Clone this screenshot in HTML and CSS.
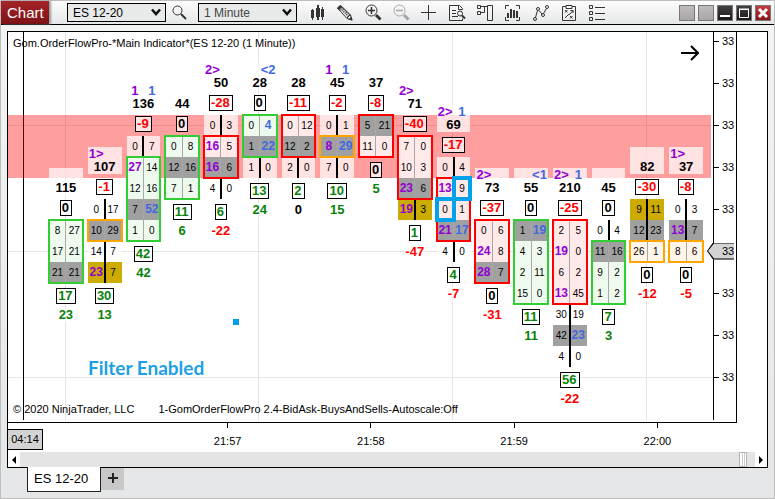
FILE: index.html
```html
<!DOCTYPE html>
<html lang="en">
<head>
<meta charset="utf-8">
<title>Chart</title>
<link rel="stylesheet" href="styles.css">
</head>
<body>
<div class="window">
  <header class="toolbar">
    <h1 class="title">Chart</h1>
    <label class="picker instrument">
      <select aria-label="Instrument"><option>ES 12-20</option></select>
      <svg class="chevron" viewBox="0 0 10 8"><path d="M1 1.5 5 6 9 1.5"/></svg>
    </label>
    <button class="search" aria-label="Search"><svg class="icon" viewBox="0 0 18 18"><circle cx="7.5" cy="6.5" r="4.5"/><path d="m11 10 5 5" stroke-width="2"/></svg></button>
    <label class="picker">
      <select class="muted" aria-label="Interval"><option>1 Minute</option></select>
      <svg class="chevron" viewBox="0 0 10 8"><path d="M1 1.5 5 6 9 1.5"/></svg>
    </label>
    <nav class="tools">
      <button aria-label="Chart style"><svg class="icon" viewBox="0 0 18 18"><path class="solid" d="M3 6h3v8H3zM8 4h4v9H8zM13 5h3v8h-3zM4 5h1v11H4zM9 1h2v15H9zM14 3h1v13h-1z"/></svg></button>
      <button aria-label="Drawing tools"><svg class="icon" viewBox="0 0 18 18"><path d="m1.5 4 3-2.5 10 9.5 1.500 5-5-1.500zM4 6.500l3-3M11 14l3.500-3.500" /><path d="m6 6 7 7M7.500 5l7 7" stroke-width="1.500" stroke-dasharray="1 1"/><path class="solid" d="m16.500 16.500-4-1 3-3zM1 4l3.500-3 2 2L3 6z"/></svg></button>
      <button aria-label="Zoom in"><svg class="icon" viewBox="0 0 18 18"><circle cx="7.500" cy="6.500" r="5.500"/><path d="M4 6.500h7M7.500 3v7" stroke-width="1.500"/><path d="m12 11 4.500 4.500" stroke-width="3"/></svg></button>
      <button aria-label="Zoom out" disabled><svg class="icon" viewBox="0 0 18 18"><circle cx="7.500" cy="6.500" r="5.500"/><path d="M4 6.500h7" stroke-width="1.500"/><path d="m12 11 4.500 4.500" stroke-width="3"/></svg></button>
      <button aria-label="Crosshair"><svg class="icon" viewBox="0 0 18 18"><path d="M8.500 1v15M1 8.500h15"/></svg></button>
      <button aria-label="Data box"><svg class="icon" viewBox="0 0 18 18"><path d="M14.500 5.500V4.500l-3-3h-10v15h13v-2M10.500 1.500v4h4M4 6.500h4M4 9.500h4M4 12.500h6"/><circle cx="12" cy="9.500" r="2.500"/><path d="m14 11.500 3 3" stroke-width="2"/></svg></button>
      <button aria-label="Chart trader"><svg class="icon" viewBox="0 0 18 18"><path d="M1.500 1.500h3v3h-3zM1.500 7.500h3v3h-3zM11.500 1.500h5v15h-5zM5 2.500h6M5 8.500h3.500v-6"/></svg></button>
      <button aria-label="Data series"><svg class="icon" viewBox="0 0 18 18"><path d="M5 1.500H1.500V5M12 1.500h3.500V5M1.500 13v3.500H5M15.500 13v3.500H12"/><path class="solid" d="M3 9h2v5H3zM6 5h2v9H6zM9 6h2v8H9zM12 7h2v7h-2z"/></svg></button>
      <button aria-label="Indicators"><svg class="icon" viewBox="0 0 18 18"><circle cx="3" cy="15" r="1.500"/><circle cx="6" cy="5" r="1.500"/><circle cx="11" cy="11" r="1.500"/><circle cx="15" cy="3" r="1.500"/><path d="m3.500 13.500 2-7M7 6.500l3 3.500M11.500 9.500l3-5"/></svg></button>
      <button aria-label="Strategies"><svg class="icon" viewBox="0 0 18 18"><path d="M6 2.500H2.500v14h13v-14H12M6 1.500h6v3H6zM5 6l2.500 2.500M7.500 6 5 8.500M10 12l2.500 2.500M12.500 12 10 14.500M5 14l3-3 2-1 3-3.500M10.500 6.500h2.500V9"/></svg></button>
      <button aria-label="Properties"><svg class="icon" viewBox="0 0 18 18"><path d="M1.500 1.500h3v3h-3zM1.500 7.500h3v3h-3zM1.500 13.500h3v3h-3zM7 3.500h10M7 9.500h10M7 15.500h10"/></svg></button>
    </nav>
    <div class="controls">
      <button class="link" aria-label="Instrument link"></button>
      <button class="link" aria-label="Interval link"></button>
      <button class="dark" aria-label="Minimize"><svg viewBox="0 0 14 14"><path d="M2 10h10" stroke-width="2"/></svg></button>
      <button class="dark" aria-label="Maximize"><svg viewBox="0 0 14 14"><path d="M2.500 3.500h9v8h-9zM2 3h10"/></svg></button>
      <button class="close" aria-label="Close"><svg viewBox="0 0 14 14"><path d="m3 3 8 8M11 3l-8 8" stroke-width="3"/></svg></button>
    </div>
  </header>

  <main class="frame">
    <div class="chart">
      <section class="plot">
        <svg class="lines">
          <line x1="8.1%" x2="8.1%" y1="0" y2="100%"/><line x1="35.5%" x2="35.5%" y1="0" y2="100%"/>
          <line x1="63%" x2="63%" y1="0" y2="100%"/><line x1="90.5%" x2="90.5%" y1="0" y2="100%"/>
          <line x1="0" x2="100%" y1="93.5" y2="93.5"/><line x1="0" x2="100%" y1="219.5" y2="219.5"/><line x1="0" x2="100%" y1="345.5" y2="345.5"/>
          <line class="cursor" x1="15.5" x2="15.5" y1="0" y2="100%"/>
        </svg>
        <div class="zone"></div>
        <div class="bars" id="bars"></div>
        <p class="caption">Gom.OrderFlowPro-*Main Indicator*(ES 12-20 (1 Minute))</p>
        <svg class="arrow" viewBox="0 0 18 16"><path d="M0 8h17M10 1l7 7-7 7"/></svg>
        <i class="dot"></i>
        <p class="note">Filter Enabled</p>
        <footer class="credits"><span>© 2020 NinjaTrader, LLC</span><span>1-GomOrderFlowPro 2.4-BidAsk-BuysAndSells-Autoscale:Off</span></footer>
      </section>
      <div class="prices">
        <ol><li>33</li><li>33</li><li>33</li><li>33</li><li>33</li><li class="last">33</li><li>33</li><li>33</li><li>33</li></ol>
      </div>
    </div>
    <div class="times">
      <span class="clock">04:14</span>
      <ol><li>21:57</li><li>21:58</li><li>21:59</li><li>22:00</li></ol>
    </div>
    <div class="scroll">
      <button aria-label="Scroll left"><svg viewBox="0 0 4 8"><path d="M4 0v8L0 4z"/></svg></button>
      <span class="thumb"></span>
      <button aria-label="Scroll right"><svg viewBox="0 0 4 8"><path d="M0 0v8l4-4z"/></svg></button>
    </div>
  </main>
  <nav class="tabs">
    <button class="tab">ES 12-20</button>
    <button class="add" aria-label="Add tab"><svg viewBox="0 0 10 10"><path d="M5 0v10M0 5h10"/></svg></button>
  </nav>
</div>
<script src="chart.js"></script>
</body>
</html>
```
FILE: styles.css
```css
* { box-sizing: border-box; }
body { margin: 0; font: 11px/14px "Liberation Sans", Arial, sans-serif; color: #000; }
h1, p, ol { margin: 0; padding: 0; font-weight: normal; }
ol { list-style: none; }
button { padding: 0; border: 0; background: none; font: inherit; color: inherit; }

.window {
  display: flex; flex-direction: column; min-height: 100vh;
  border: 1px solid #bdbdbd; background: linear-gradient(#f3f4f4, #e5e6e8);
}

.toolbar {
  display: flex; align-items: center; height: 24px;
  border-bottom: 1px solid #000; background: linear-gradient(#fcfcfc, #e6e7e8);
}
.title {
  align-self: stretch; width: 48px; padding-left: 6px;
  font-size: 15px; line-height: 23px; color: #fff;
  background: linear-gradient(#a52328, #7c1216);
  box-shadow: 2px 0 2px #999;
}
.picker { position: relative; width: 99px; height: 19px; }
.instrument { margin-left: 18px; }
.picker select {
  display: block; width: 100%; height: 100%; padding: 0 5px; appearance: none;
  border: 1px solid #000; border-radius: 0; background: #e8eaea;
  font: 12px "Liberation Sans", Arial, sans-serif; color: #000;
}
.picker .muted { color: #444; }
.chevron { position: absolute; right: 5px; top: 5px; width: 10px; height: 8px; pointer-events: none; fill: none; stroke: #111; stroke-width: 2.5; }
.search { display: flex; width: 32px; padding-left: 4px; }
.icon { width: 18px; height: 18px; fill: none; stroke: #333; }
.solid { fill: #333; stroke: none; }
.tools { display: flex; margin-left: 6px; }
.tools button { display: flex; justify-content: center; width: 28px; }
.tools button:disabled { opacity: .4; }
.controls { display: flex; gap: 3px; margin: 0 3px 0 auto; }
.controls button { display: flex; width: 16px; height: 16px; border: 1px solid #777; }
.controls svg { width: 14px; height: 14px; fill: none; stroke: #fff; }
.link { background: linear-gradient(#c0bcbd, #aaa6a7); }
.dark { background: linear-gradient(#444041, #1c1819); }
.close { background: linear-gradient(#c43a3e, #8c1519); }

.frame { display: flex; flex: 1; flex-direction: column; margin: 6px 6px 0; border: 1px solid #000; background: #fff; }
.chart { display: flex; flex: 1; margin-right: 30px; border: solid #000; border-width: 0 1px 1px 0; }
.plot { position: relative; display: flex; flex: 1; flex-direction: column; min-width: 0; }
.lines { position: absolute; inset: 0 0 2px; width: 100%; height: calc(100% - 2px); shape-rendering: crispEdges; stroke: #e4e4e4; }
.cursor { stroke: #000; }
.zone { position: absolute; top: 83px; right: 2px; left: 0; height: 63px; background: rgba(255, 0, 0, .38); }
.caption { position: absolute; top: 4px; left: 5px; }
.arrow { position: absolute; top: 13px; right: 14px; width: 18px; height: 16px; fill: none; stroke: #000; stroke-width: 2; }
.dot { position: absolute; top: 287px; left: 225px; width: 6px; height: 6px; background: #009fe8; }
.note { position: absolute; top: 324px; left: 80px; font: bold 19px/24px Lato, sans-serif; color: #1c9fe6; }
.credits { position: relative; display: flex; gap: 24px; margin-top: auto; padding: 0 5px 6px; }

.bars {
  position: relative; display: grid; grid-template-columns: repeat(17, 1fr); align-items: start;
  column-gap: 5px; margin-bottom: -20px; padding: 31px 10px 0 41px;
  font-weight: bold; font-size: 13px; text-align: center;
}
.bar { display: flex; flex-direction: column; align-items: center; margin-top: calc(var(--level) * 21px); }
.head { align-self: stretch; margin-bottom: 5px; background: rgba(255, 255, 255, .7); }
.signals { display: grid; grid-template-columns: 1fr 1fr; justify-items: center; height: 13px; line-height: 13px; }
.signals span { white-space: nowrap; }
.box { height: 16px; padding: 0 2px 0 1px; border: 1px solid #000; line-height: 14px; background: rgba(255, 255, 255, .7); }
.top { margin-bottom: 4px; }
.bottom { margin: 5px 0 4px; }
.sum { background: rgba(255, 255, 255, .7); }
.pos { color: #0a820a; }
.neg { color: #f00; }
.group { align-self: stretch; }
.row {
  display: grid; grid-template-columns: 1fr 1fr; height: 21px; line-height: 21px;
  font-size: 10px; font-weight: normal;
  background: linear-gradient(#000, #000) center / 2px 100% no-repeat rgba(255, 255, 255, .7);
}
.framed { position: relative; outline: 2px solid; outline-offset: -1px; }
.framed .row { background-image: linear-gradient(#a8a8a8, #a8a8a8); background-size: 1px 100%; }
.green { outline-color: #32cd32; } .green .row { background-color: #effaef; }
.red { outline-color: #f00; } .red .row { background-color: #ffe9e9; }
.orange { outline-color: #ffa500; } .orange .row { background-color: #fff5e9; }
.group .gray { background-color: #a0a0a0; }
.group .gold { background-color: #ccac00; }
.buy, .sell { font-size: 12px; font-weight: bold; }
.sell { color: #9400d3; }
.buy { color: #4169e1; }
.signals .buy, .signals .sell { font-size: 13px; }
.marked { position: relative; }
.marked::after { content: ""; position: absolute; inset: -2px; border: 4px solid #00a2ec; }

.prices { width: 23px; margin-bottom: 2px; border-left: 1px solid #000; }
.prices ol { margin-top: -12px; }
.prices li { position: relative; display: flex; align-items: center; gap: 3px; height: 42px; }
.prices li::before { content: ""; width: 5px; height: 1px; background: #000; }
.prices .last { z-index: 1; }
.prices .last::before {
  flex: none; width: 27px; height: 17px; margin: 0 -15px 0 -7px; background: #000;
  clip-path: polygon(0 50%, 6px 0, 100% 0, 100% 1px, 7px 1px, 1px 50%, 7px 16px, 100% 16px, 100% 100%, 6px 100%);
}
.prices .last::after {
  content: ""; position: absolute; z-index: -1; left: -7px; width: 27px; height: 17px; background: #d3d3d3;
  clip-path: polygon(0 50%, 6px 0, 100% 0, 100% 100%, 6px 100%);
}

.times { display: flex; align-items: flex-start; height: 29px; }
.clock { width: 36px; margin: 6px 0 0 -1px; border: 1px solid #000; background: #d3d3d3; line-height: 19px; text-align: center; }
.times ol { display: grid; flex: 1; grid-template-columns: repeat(4, 1fr); margin: 0 38px 0 113px; }
.times li { text-align: center; line-height: 14px; }
.times li::before { content: ""; display: block; width: 1px; height: 5px; margin: 0 auto 6px; background: #000; }

.scroll { display: flex; height: 15px; background: #e4e4e4; }
.scroll button { display: flex; align-items: center; justify-content: center; width: 12px; background: #fff; }
.scroll svg { width: 4px; height: 8px; }
.thumb { width: 8px; margin: 0 8px 0 auto; border: 1px solid #b5b5b5; background: linear-gradient(90deg, #fff 2px, #ccc 2px 3px, #fff 3px 4px, #ccc 4px 5px, #fff 5px); }

.tabs { display: flex; align-items: flex-start; height: 30px; padding-left: 26px; }
.tab { width: 74px; height: 25px; margin-top: -1px; padding-left: 6px; border: solid #222; border-width: 0 1px 1px; background: #fff; font-size: 13px; text-align: left; }
.add { width: 23px; height: 22px; background: #c8c8c8; }
.add svg { width: 10px; height: 10px; stroke: #222; stroke-width: 2; }
```
FILE: chart.js
```js
// Each bar: level = rows below the highest bar; sell/buy = stacked signals.
// Rows are "bid ask"; s/b prefix = highlighted side, * = marked cell,
// trailing gray/gold = row shade. A group's frame is its outline colour.
const bars = [
  { level: 5, total: 115, delta: 0, groups: [['green', '8 27', '17 21', '21 21 gray']], max: 17, sum: 23 },
  { level: 4, total: 107, delta: -1, sell: '1>', groups: [['', '0 17'], ['orange', '10 29 gray'], ['', '14 7', 's23 7 gold']], max: 30, sum: 13 },
  { level: 1, total: 136, delta: -9, sell: '1', buy: '1', groups: [['', '0 7'], ['green', 's27 14', '12 16', '7 b52 gray', '1 0']], max: 42, sum: 42 },
  { level: 1, total: 44, delta: 0, groups: [['green', '0 8', '12 16 gray', '7 1']], max: 11, sum: 6 },
  { level: 0, total: 50, delta: -28, sell: '2>', groups: [['', '0 3'], ['red', 's16 5', 's16 6 gray'], ['', '4 0']], max: 6, sum: -22 },
  { level: 0, total: 28, delta: 0, buy: '<2', groups: [['green', '0 b4', '1 b22 gray'], ['', '1 0']], max: 13, sum: 24 },
  { level: 0, total: 28, delta: -11, groups: [['red', '0 12', '12 2 gray'], ['', '2 0']], max: 2, sum: 0 },
  { level: 0, total: 45, delta: -2, sell: '1', buy: '1', groups: [['', '0 1'], ['orange', 's8 b29 gray'], ['', '7 0']], max: 10, sum: 15 },
  { level: 0, total: 37, delta: -8, groups: [['red', '5 21 gray', '11 0']], max: 0, sum: 5 },
  { level: 1, total: 71, delta: -40, sell: '2>', groups: [['red', '7 0', '10 3', 's23 6 gray'], ['', 's19 3 gold']], max: 1, sum: -47 },
  { level: 2, total: 69, delta: -17, sell: '2>', buy: '1', groups: [['', '0 4'], ['red', 's13 *9', '*0 1', 's21 b17 gray'], ['', '4 0']], max: 4, sum: -7 },
  { level: 5, total: 73, delta: -37, sell: '2>', groups: [['red', '0 6', 's24 8', 's28 7 gray']], max: 0, sum: -31 },
  { level: 5, total: 55, delta: 0, buy: '<1', groups: [['green', '1 b19 gray', '4 3', '2 11', '15 0']], max: 11, sum: 11 },
  { level: 5, total: 210, delta: -25, sell: '2>', buy: '1', groups: [['red', '2 5', 's19 0', '6 2', 's13 45'], ['', '30 19', '42 b23 gray', '4 0']], max: 56, sum: -22 },
  { level: 5, total: 45, delta: 0, groups: [['', '0 4'], ['green', '11 16 gray', '9 2', '1 2']], max: 7, sum: 3 },
  { level: 4, total: 82, delta: -30, groups: [['', '9 11 gold', '12 23 gray'], ['orange', '26 1']], max: 0, sum: -12 },
  { level: 4, total: 37, delta: -8, sell: '1>', groups: [['', '0 3', 's13 7 gray'], ['orange', '8 6']], max: 0, sum: -5 }
];

const kinds = { s: 'sell', b: 'buy', '*': 'marked' };
const sign = n => (n > 0 ? 'pos' : n < 0 ? 'neg' : '');
const cell = t => `<span class="${kinds[t[0]] || ''}">${t.replace(/^[sb*]/, '')}</span>`;
const row = r => {
  const [bid, ask, shade = ''] = r.split(' ');
  return `<div class="row ${shade}">${cell(bid)}${cell(ask)}</div>`;
};
const group = ([frame, ...rows]) =>
  `<div class="group ${frame && 'framed ' + frame}">${rows.map(row).join('')}</div>`;
const text = s => (s || '').replace('<', '&lt;');

document.getElementById('bars').innerHTML = bars.map(b => `
  <div class="bar" style="--level:${b.level}">
    <div class="head">
      <div class="signals"><span class="sell">${text(b.sell)}</span><span class="buy">${text(b.buy)}</span></div>
      <div>${b.total}</div>
    </div>
    <div class="box top ${sign(b.delta)}">${b.delta}</div>
    ${b.groups.map(group).join('')}
    <div class="box bottom ${sign(b.max)}">${b.max}</div>
    <div class="sum ${sign(b.sum)}">${b.sum}</div>
  </div>`).join('');
```
